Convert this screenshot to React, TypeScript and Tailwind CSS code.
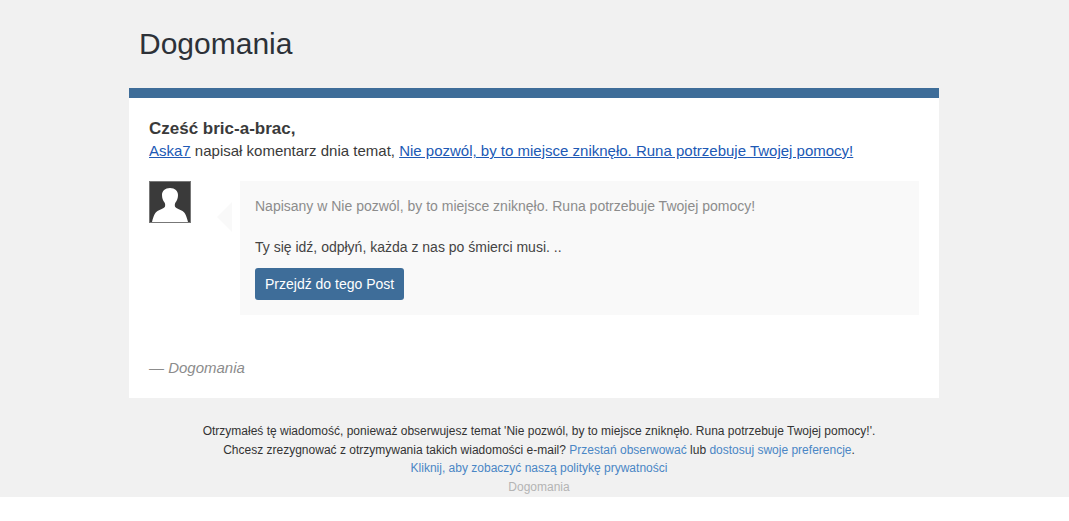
export default function App() {
  return (
    <div className="bg-white min-h-[521px] font-['Liberation_Sans',Arial,sans-serif]">
      <div className="bg-[#f1f1f1] h-[497px] overflow-hidden">
        <div className="w-[810px] ml-[129px]">
          <div className="h-[88px] pl-[10px] pt-[26px]">
            <h1 className="text-[30px] leading-[36px] text-[#2d3138]">Dogomania</h1>
          </div>

          <div className="bg-white border-t-[10px] border-[#3e6d99] h-[310px] px-[20px] pt-[20px]">
            <div className="text-[#3a3a3a]">
              <div className="text-[17px] leading-[22px] font-bold">Cześć bric-a-brac,</div>
              <div className="text-[15px] leading-[21px]">
                <a className="text-[#2059b5] underline">Aska7</a> napisał komentarz dnia temat,{" "}
                <a className="text-[#2059b5] underline">Nie pozwól, by to miejsce zniknęło. Runa potrzebuje Twojej pomocy!</a>
              </div>
            </div>

            <div className="flex mt-[20px]">
              <div className="w-[42px] h-[42px] shrink-0 border border-[#777] bg-[#3a3a3a]">
                <svg viewBox="0 0 40 40" className="w-full h-full block">
                  <path
                    d="M20 6C15 6 12 9 12 13C12 16 13 18.500 14.500 20.500C15.300 21.500 15.400 24 14.800 25C13.800 26.500 10 27.500 7.500 29C5 30.500 3.500 34 2 40L38 40C36.500 34 35 30.500 32.500 29C30 27.500 26.200 26.500 25.200 25C24.600 24 24.700 21.500 25.500 20.500C27 18.500 28 16 28 13C28 9 25 6 20 6Z"
                    fill="#fff"
                  />
                </svg>
              </div>

              <div className="relative ml-[49px] w-[679px] h-[134px] bg-[#f9f9f9] px-[15px] pt-[15px]">
                <div className="absolute left-[-23px] top-[21px] w-0 h-0 border-y-[15px] border-y-transparent border-r-[15px] border-r-[#f9f9f9]" />
                <div className="text-[14px] leading-[20px] text-[#8c8c8c]">
                  Napisany w Nie pozwól, by to miejsce zniknęło. Runa potrzebuje Twojej pomocy!
                </div>
                <div className="text-[14px] leading-[20px] text-[#444] mt-[21px]">
                  Ty się idź, odpłyń, każda z nas po śmierci musi. ..
                </div>
                <a className="inline-block mt-[11px] h-[32px] px-[10px] rounded-[3px] bg-[#3e6d99] text-white text-[14px] leading-[32px]">
                  Przejdź do tego Post
                </a>
              </div>
            </div>

            <div className="mt-[43px] text-[15px] leading-[20px] italic text-[#8c8c8c]">— Dogomania</div>
          </div>

          <div className="pt-[24px] pl-[10px] text-center text-[12px] leading-[18.7px] text-[#333]">
            <div>
              Otrzymałeś tę wiadomość, ponieważ obserwujesz temat 'Nie pozwól, by to miejsce zniknęło. Runa potrzebuje Twojej pomocy!'.
            </div>
            <div>
              Chcesz zrezygnować z otrzymywania takich wiadomości e-mail?{" "}
              <a className="text-[#4a86c5]">Przestań obserwować</a> lub{" "}
              <a className="text-[#4a86c5]">dostosuj swoje preferencje</a>.
            </div>
            <div>
              <a className="text-[#4a86c5]">Kliknij, aby zobaczyć naszą politykę prywatności</a>
            </div>
            <div className="text-[#b4b4b4]">Dogomania</div>
          </div>
        </div>
      </div>
    </div>
  );
}
